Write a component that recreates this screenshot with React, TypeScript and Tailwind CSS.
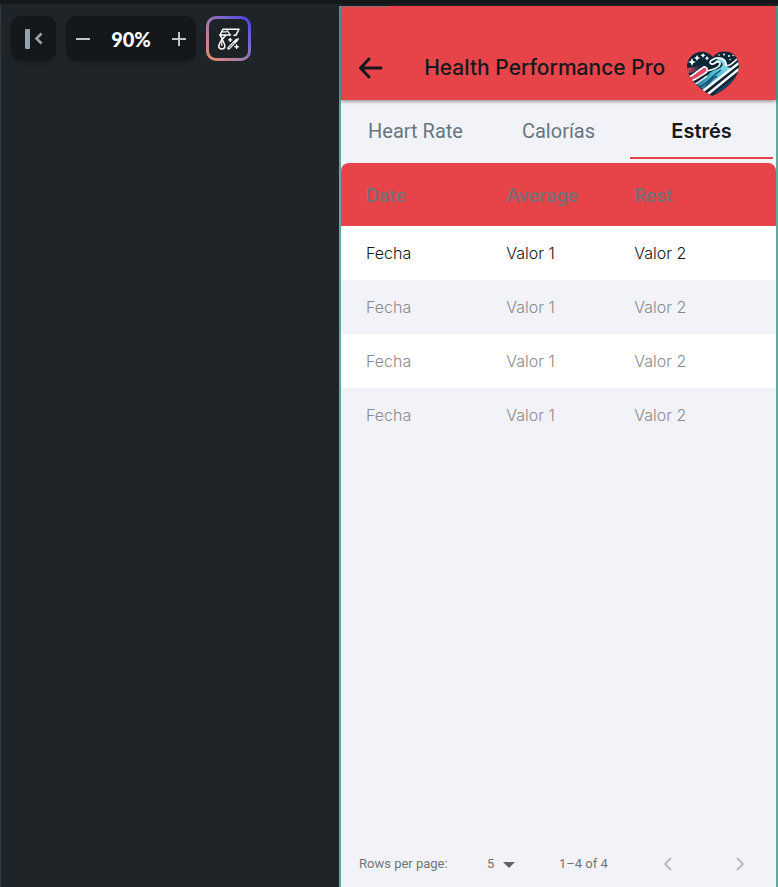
import { useState } from "react";

const tabs = ["Heart Rate", "Calorías", "Estrés"];
const rows = [1, 2, 3, 4];

function CollapseIcon() {
  return (
    <svg width="20" height="22" viewBox="0 0 20 22" fill="none" aria-hidden="true">
      <rect x="1" y="1" width="5" height="20" rx="1" fill="#95a1ac" />
      <path d="M17.5 5.5 L12.5 10.5 L17.5 15.5" stroke="#95a1ac" strokeWidth="2.6" />
    </svg>
  );
}

function MagicIcon() {
  return (
    <svg width="24" height="24" viewBox="0 0 24 24" fill="none" stroke="#fff" strokeWidth="1.5" strokeLinejoin="round" strokeLinecap="round" aria-hidden="true">
      <path d="M13.5 8 H3 L6 2.2 H22 L19 8.2 H17" />
      <path d="M9.5 2.5 L13 7.6 M5.5 4.8 H9.5" strokeWidth="1.2" />
      <path d="M3 8 L5.5 12 L8.5 8.6" />
      <path d="M5.2 12.2 C3 15.6 1.8 17.2 1.8 19 A3 3 0 0 0 7.8 19 C7.8 17.2 6.6 15 5.2 12.2 Z" />
      <path d="M4.8 12.5 V18.5" strokeWidth="1.2" />
      <path d="M11.6 21.2 L19.8 13" strokeWidth="2.8" />
      <path d="M11.8 21 L17 15.8" stroke="#1d2226" strokeWidth="0.8" />
      <path d="M13.2 11.4 V14.4 M11.7 12.9 H14.7 M19.6 18 V21.4 M17.9 19.7 H21.3 M21.2 11.6 V12" strokeWidth="1.4" />
    </svg>
  );
}

function HeartLogo() {
  return (
    <svg width="54" height="48" viewBox="0 0 54 48" role="img" aria-label="Heart with a wave">
      <defs>
        <clipPath id="heart">
          <path d="M27 7 C22 1 15 .5 9 3.5 C2 7 -.5 15 2 22 C5 32 16 40 26 46 C38 41 50 31 52.5 20 C54 11 50 4 43 2 C37 .5 31 2 27 7Z" />
        </clipPath>
        <linearGradient id="wave" x1="0" y1="1" x2="1" y2="0">
          <stop offset="0" stopColor="#237597" />
          <stop offset=".55" stopColor="#4fc0d8" />
          <stop offset="1" stopColor="#a7ecf1" />
        </linearGradient>
        <linearGradient id="blush" x1="0" y1="0" x2="1" y2="0">
          <stop offset="0" stopColor="#e84b62" />
          <stop offset="1" stopColor="#102b3f" />
        </linearGradient>
      </defs>
      <g clipPath="url(#heart)">
        <rect width="54" height="48" fill="#0d2638" />
        <path d="M0 18 Q8 18 14 15 L12 21 L0 24Z" fill="url(#blush)" />
        <path d="M0 28 Q10 25 15 19 Q21 16 21 22 Q14 28 3 32Z" fill="#df4967" />
        <path d="M10 34 C20 30 22 22 29 20 C40 17 38 10 29 12 C33 6 42 8 41 17 L45 18 C38 26 28 32 18 40Z" fill="url(#wave)" />
        <path d="M0 28 C8 26 12 20 17 17.500 C19 16 22 18 21 21 C26 20 31 18 33 16 C36 12 32 11 29 13 C25 16 22 12 26 10 C32 6 40 8 40 15 C42 17 46 14 51 9" fill="none" stroke="#fff" strokeWidth="1.7" />
        <path d="M3 32 C12 29 16 25 21 22 M7 35 C14 32 18 28 21 26" fill="none" stroke="#fff" strokeWidth="1.5" />
        <path d="M14 37 C22 34 24 27 35 20 M19 37 C24 33 25 28 31 26" fill="none" stroke="#174d70" strokeWidth="1.4" />
        <path d="M17 41 L53 13 M22 44 L53 19" stroke="#fff" strokeWidth="2.4" />
        <path d="M30 43 L51 27" stroke="#17466a" strokeWidth="2" />
        <g fill="#fff">
          <path d="M6 8 L7.2 11 L10 12 L7.2 13 L6 16 L4.8 13 L2 12 L4.8 11Z" />
          <path d="M11 5 l1 2 2 1 -2 1 -1 2 -1 -2 -2 -1 2 -1Z" />
          <path d="M17 3 l.8 1.6 1.7 .9 -1.7 .8 -.8 1.7 -.8 -1.7 -1.7 -.8 1.7 -.9Z" />
          <path d="M21 6 l.8 1.4 1.4 .8 -1.4 .8 -.8 1.4 -.8 -1.4 -1.4 -.8 1.4 -.8Z" />
          <circle cx="33" cy="5" r=".8" />
          <circle cx="38" cy="4.500" r="1" />
          <circle cx="43" cy="6" r="1" />
          <circle cx="47" cy="5.500" r=".8" />
          <circle cx="44" cy="9.500" r=".8" />
        </g>
      </g>
    </svg>
  );
}

export default function App() {
  const [zoom, setZoom] = useState(90);
  const [activeTab, setActiveTab] = useState("Estrés");

  return (
    <div className="flex min-h-screen flex-col border-t-4 border-[#14181b] bg-[#1f2428] font-['Roboto',sans-serif]">
      <div className="flex grow">
        <aside className="w-[339px] shrink-0 border-l border-[#303840] py-3 pl-[10px]">
          <div className="flex gap-[10px]">
            <button aria-label="Collapse panel" className="flex size-[45px] items-center justify-center rounded-[10px] bg-[#14181b] shadow-md">
              <CollapseIcon />
            </button>
            <div className="flex h-[45px] w-[130px] items-center justify-between rounded-[10px] bg-[#14181b] px-[9px] shadow-md">
              <button aria-label="Zoom out" onClick={() => setZoom(zoom - 10)}>
                <svg width="16" height="16" viewBox="0 0 16 16" aria-hidden="true">
                  <path d="M1 8 H15" stroke="#c0c3c5" strokeWidth="2" />
                </svg>
              </button>
              <span className="font-['Lato',sans-serif] text-xl font-black text-white">{zoom}%</span>
              <button aria-label="Zoom in" onClick={() => setZoom(zoom + 10)}>
                <svg width="16" height="16" viewBox="0 0 16 16" aria-hidden="true">
                  <path d="M1 8 H15 M8 1 V15" stroke="#c0c3c5" strokeWidth="2" />
                </svg>
              </button>
            </div>
            <button aria-label="Generate theme" className="size-[45px] rounded-[10px] bg-linear-to-tr from-[#ee8b60] to-[#4b39ef] p-[3px]">
              <span className="flex size-full items-center justify-center rounded-[7px] bg-[#1d2226]">
                <MagicIcon />
              </span>
            </button>
          </div>
        </aside>

        <main className="relative mt-[2px] flex min-w-0 grow flex-col border-x-2 border-[#60a99f] bg-[#f2f3f8]">
          <span className="absolute top-0 left-0 z-20 h-px w-12 bg-[#8a6f6b]" />
          <header className="z-10 flex h-[94px] shrink-0 items-end bg-[#e74449] pr-9 pl-[17px] shadow-[0_1px_4px_rgba(0,0,0,0.5)]">
            <button aria-label="Back" className="flex h-16 items-center">
              <svg width="26" height="24" viewBox="0 0 26 24" fill="none" stroke="#14181b" strokeWidth="3" strokeLinecap="round" strokeLinejoin="round" aria-hidden="true">
                <path d="M11 3 L2.500 12 L11 21 M3 12 H23" />
              </svg>
            </button>
            <h1 className="flex h-16 grow items-center justify-end pr-[21px] font-['Inter',sans-serif] text-[21px] font-medium whitespace-nowrap text-[#14181b]">
              Health Performance Pro
            </h1>
            <div className="pb-[2px]">
              <HeartLogo />
            </div>
          </header>

          <div role="tablist" className="flex h-[63px] shrink-0 px-[3px] pb-1">
            {tabs.map((tab) => (
              <button
                key={tab}
                role="tab"
                aria-selected={tab === activeTab}
                onClick={() => setActiveTab(tab)}
                className={
                  tab === activeTab
                    ? "flex-1 border-b-2 border-[#e74449] pt-1 font-['Inter',sans-serif] text-xl font-semibold text-[#14181b]"
                    : "flex-1 border-b-2 border-transparent pt-1 text-xl text-[#677681]"
                }
              >
                {tab}
              </button>
            ))}
          </div>

          <table className="w-full table-fixed border-separate border-spacing-0 text-left font-['Inter',sans-serif]">
            <colgroup>
              <col className="w-[38%]" />
              <col className="w-[29.4%]" />
              <col />
            </colgroup>
            <thead>
              <tr className="h-[63px] text-lg text-[#7a6e76]">
                <th scope="col" className="rounded-tl-lg bg-[#e74449] pt-[2px] pl-[25px] font-semibold">Date</th>
                <th scope="col" className="bg-[#e74449] pt-[2px] font-semibold">Average</th>
                <th scope="col" className="rounded-tr-lg bg-[#e74449] pt-[2px] font-semibold">Rest</th>
              </tr>
            </thead>
            <tbody>
              {rows.map((row) => (
                <tr key={row} className="h-[54px] text-base font-light text-[#898b8e] first:text-[#14181b] odd:bg-white">
                  <td className="pl-[25px]">Fecha</td>
                  <td>Valor 1</td>
                  <td>Valor 2</td>
                </tr>
              ))}
            </tbody>
          </table>

          <footer className="mt-auto flex h-[46px] items-center pr-[30px] pl-[18px] text-[13px] text-[#717376]">
            <label htmlFor="page-size" className="w-32">Rows per page:</label>
            <div className="relative mr-10 w-8">
              <select id="page-size" defaultValue="5" className="block w-full appearance-none bg-transparent">
                <option>5</option>
                <option>10</option>
              </select>
              <svg width="12" height="6" viewBox="0 0 12 6" className="pointer-events-none absolute top-2 right-1" aria-hidden="true">
                <path d="M0 0 H12 L6 6Z" fill="#616161" />
              </svg>
            </div>
            <span>1–4 of 4</span>
            <div className="ml-auto flex gap-[60px]">
              <button aria-label="Previous page" disabled>
                <svg width="12" height="16" viewBox="0 0 12 16" fill="none" aria-hidden="true">
                  <path d="M9 2 L3 8 L9 14" stroke="#b7b9bc" strokeWidth="2" />
                </svg>
              </button>
              <button aria-label="Next page" disabled>
                <svg width="12" height="16" viewBox="0 0 12 16" fill="none" aria-hidden="true">
                  <path d="M3 2 L9 8 L3 14" stroke="#b7b9bc" strokeWidth="2" />
                </svg>
              </button>
            </div>
          </footer>
        </main>
      </div>
    </div>
  );
}
